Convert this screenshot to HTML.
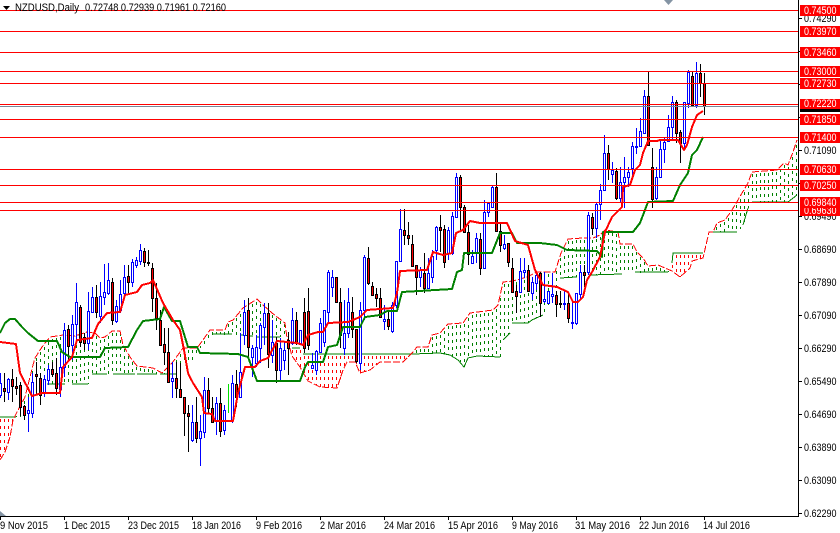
<!DOCTYPE html>
<html lang="en">
<head>
<meta charset="utf-8">
<title>NZDUSD Daily</title>
<style>
html,body{margin:0;padding:0;background:#fff;width:840px;height:533px;overflow:hidden}
svg{display:block;position:absolute;left:0;top:0}
text{font-family:"Liberation Sans",sans-serif;font-size:11px;fill:#000}
.w{fill:#fff}
</style>
</head>
<body>
<svg id="c" width="840" height="533" viewBox="0 0 840 533" xmlns="http://www.w3.org/2000/svg">
  <g id="hatch" shape-rendering="crispEdges"></g>
  <g id="spans" shape-rendering="crispEdges" fill="none" stroke-width="1"></g>
  <g id="candles" shape-rendering="crispEdges"></g>
  <g id="ind" shape-rendering="crispEdges" fill="none" stroke-width="2" stroke-linejoin="round"></g>
  <g id="hl" shape-rendering="crispEdges"></g>
  <g id="ticks" shape-rendering="crispEdges"></g>
  <polygon points="3,6 10,6 6.5,10" fill="#000"/>
  <polygon points="664,0 673,0 668.5,5" fill="#8494a4"/>
  <polygon points="0,511 6,516 0,516" fill="#8494a4"/>
  <text x="15" y="11" textLength="64" lengthAdjust="spacingAndGlyphs">NZDUSD,Daily</text>
  <text x="85" y="11" textLength="141" lengthAdjust="spacingAndGlyphs">0.72748 0.72939 0.71961 0.72160</text>

  <g text-anchor="start">
    <text x="804" y="22" textLength="32.5" lengthAdjust="spacingAndGlyphs">0.74290</text>
    <text x="804" y="154" textLength="32.5" lengthAdjust="spacingAndGlyphs">0.71090</text>
    <text x="804" y="220" textLength="32.5" lengthAdjust="spacingAndGlyphs">0.69490</text>
    <text x="804" y="253" textLength="32.5" lengthAdjust="spacingAndGlyphs">0.68690</text>
    <text x="804" y="286" textLength="32.5" lengthAdjust="spacingAndGlyphs">0.67890</text>
    <text x="804" y="319" textLength="32.5" lengthAdjust="spacingAndGlyphs">0.67090</text>
    <text x="804" y="352" textLength="32.5" lengthAdjust="spacingAndGlyphs">0.66290</text>
    <text x="804" y="385" textLength="32.5" lengthAdjust="spacingAndGlyphs">0.65490</text>
    <text x="804" y="418" textLength="32.5" lengthAdjust="spacingAndGlyphs">0.64690</text>
    <text x="804" y="451" textLength="32.5" lengthAdjust="spacingAndGlyphs">0.63890</text>
    <text x="804" y="484" textLength="32.5" lengthAdjust="spacingAndGlyphs">0.63090</text>
    <text x="804" y="517" textLength="32.5" lengthAdjust="spacingAndGlyphs">0.62290</text>
  </g>

  <g shape-rendering="crispEdges" fill="#ff0000">
    <rect x="800" y="102" width="40" height="10" fill="#000"/>
    <rect x="800" y="5" width="40" height="11"/>
    <rect x="800" y="26" width="40" height="11"/>
    <rect x="800" y="47" width="40" height="11"/>
    <rect x="800" y="66" width="40" height="11"/>
    <rect x="800" y="78" width="40" height="11"/>
    <rect x="800" y="99" width="40" height="10"/>
    <rect x="800" y="114" width="40" height="11"/>
    <rect x="800" y="132" width="40" height="11"/>
    <rect x="800" y="164" width="40" height="11"/>
    <rect x="800" y="180" width="40" height="11"/>
    <rect x="800" y="205" width="40" height="11"/>
  </g>
  <text class="w" x="804" y="14" textLength="32.5" lengthAdjust="spacingAndGlyphs">0.74500</text>
  <text class="w" x="804" y="35" textLength="32.5" lengthAdjust="spacingAndGlyphs">0.73970</text>
  <text class="w" x="804" y="56" textLength="32.5" lengthAdjust="spacingAndGlyphs">0.73460</text>
  <text class="w" x="804" y="75" textLength="32.5" lengthAdjust="spacingAndGlyphs">0.73000</text>
  <text class="w" x="804" y="87" textLength="32.5" lengthAdjust="spacingAndGlyphs">0.72730</text>
  <text class="w" x="804" y="107" textLength="32.5" lengthAdjust="spacingAndGlyphs">0.72220</text>
  <text class="w" x="804" y="123" textLength="32.5" lengthAdjust="spacingAndGlyphs">0.71850</text>
  <text class="w" x="804" y="141" textLength="32.5" lengthAdjust="spacingAndGlyphs">0.71400</text>
  <text class="w" x="804" y="173" textLength="32.5" lengthAdjust="spacingAndGlyphs">0.70630</text>
  <text class="w" x="804" y="189" textLength="32.5" lengthAdjust="spacingAndGlyphs">0.70250</text>
  <text class="w" x="804" y="214" textLength="32.5" lengthAdjust="spacingAndGlyphs">0.69630</text>
  <rect x="800" y="197" width="40" height="11" fill="#ff0000" shape-rendering="crispEdges"/>
  <text class="w" x="804" y="206" textLength="32.5" lengthAdjust="spacingAndGlyphs">0.69840</text>

  <text x="0" y="529" textLength="48" lengthAdjust="spacingAndGlyphs">9 Nov 2015</text>
  <text x="64" y="529" textLength="46" lengthAdjust="spacingAndGlyphs">1 Dec 2015</text>
  <text x="128" y="529" textLength="51" lengthAdjust="spacingAndGlyphs">23 Dec 2015</text>
  <text x="192" y="529" textLength="49" lengthAdjust="spacingAndGlyphs">18 Jan 2016</text>
  <text x="256" y="529" textLength="46" lengthAdjust="spacingAndGlyphs">9 Feb 2016</text>
  <text x="320" y="529" textLength="46" lengthAdjust="spacingAndGlyphs">2 Mar 2016</text>
  <text x="384" y="529" textLength="51" lengthAdjust="spacingAndGlyphs">24 Mar 2016</text>
  <text x="448" y="529" textLength="50" lengthAdjust="spacingAndGlyphs">15 Apr 2016</text>
  <text x="512" y="529" textLength="46" lengthAdjust="spacingAndGlyphs">9 May 2016</text>
  <text x="575" y="529" textLength="55" lengthAdjust="spacingAndGlyphs">31 May 2016</text>
  <text x="639" y="529" textLength="50" lengthAdjust="spacingAndGlyphs">22 Jun 2016</text>
  <text x="703" y="529" textLength="47" lengthAdjust="spacingAndGlyphs">14 Jul 2016</text>
</svg>
<script>
(function(){
var NS="http://www.w3.org/2000/svg";
function el(parent,name,attrs){var e=document.createElementNS(NS,name);for(var k in attrs)e.setAttribute(k,attrs[k]);document.getElementById(parent).appendChild(e);return e;}
function rect(p,x,y,w,h,f){el(p,"rect",{x:x,y:y,width:w,height:h,fill:f});}

var A=[0,460,5,452,10,437,13,420,16,414,25,397,33,365,35,358,42,347,50,337,63,335,75,336,87,332,95,333,100,338,105,337,112,331,120,331,123,345,130,357,137,366,153,368,162,373,172,363,183,348,197,348,203,340,210,330,225,330,228,322,233,320,243,308,257,299,263,305,272,313,285,323,287,338,292,356,300,367,308,381,320,387,337,388,343,370,347,362,355,362,360,373,370,370,380,362,403,362,412,353,417,347,428,347,432,335,440,333,448,324,463,323,470,313,493,310,498,305,503,282,513,281,527,277,537,272,555,272,561,253,568,239,583,238,593,238,600,235,605,230,618,232,620,244,633,244,637,252,643,258,648,266,658,265,672,271,680,277,690,268,692,261,703,258,706,245,709,232,713,232,717,223,725,220,732,210,748,183,752,172,777,170,784,163,788,165,793,152,797,140];
var B=[0,417,16,417,25,418,30,415,33,397,37,384,88,384,92,374,177,374,182,362,193,362,198,350,213,334,257,337,285,337,287,338,292,348,300,348,303,354,413,354,440,353,450,355,458,360,464,367,468,358,477,356,500,357,503,340,510,333,512,323,528,323,532,320,543,315,550,302,560,278,577,277,590,275,622,274,630,273,668,272,672,263,673,253,703,253,706,252,707,238,709,232,737,232,743,225,748,208,752,202,788,202,797,195];
function at(L,x){for(var i=0;i<L.length-2;i+=2){if(x>=L[i]&&x<=L[i+2]){var t=(x-L[i])/((L[i+2]-L[i])||1);return L[i+1]+t*(L[i+3]-L[i+1]);}}return L[L.length-1];}
function pts(L){var s=[];for(var i=0;i<L.length;i+=2)s.push(L[i]+","+L[i+1]);return s.join(" ");}

var dG="",dR="";
for(var x=0;x<=796;x+=4){
  var a=at(A,x),b=at(B,x),t=Math.round(Math.min(a,b)),u=Math.round(Math.max(a,b));
  for(var y=t+2;y<u;y+=7){
    var h=Math.min(3,u-y);
    var s="M"+x+" "+y+"h1v"+h+"h-1z";if(a<b)dG+=s;else dR+=s;
  }
}
el("hatch","path",{d:dG,fill:"#008000"});
el("hatch","path",{d:dR,fill:"#ff0000"});
[[0,417,16,417],[47,384,65,384],[72,384,88,384],[92,374,107,374],[113,374,135,374],[137,374,157,374],[160,374,177,374],[213,334,232,334],[240,335,253,336],[257,337,280,337],[292,348,300,348],[303,354,413,354],[413,354,440,353],[440,353,450,355,458,360,464,367,468,358,477,356,500,357],[503,340,510,333],[512,323,528,323,532,320,543,315],[560,278,577,277],[590,275,622,274],[635,272,668,272],[672,263,673,253,703,253],[713,232,737,232],[743,225,748,208],[752,202,788,202,797,195]].forEach(function(S){
  el("spans","polyline",{points:pts(S),stroke:"#008000"});
});
el("spans","polyline",{points:pts(A),stroke:"#ff0000","stroke-dasharray":"7 2"});

var D="b0 373 398 383 395,r4 373 402 388 391,b8 378 400 379 392,r12 369 402 379 386,r16 377 395 386 388,r20 382 416 385 407,r24 405 420 406 415,b28 397 432 410 413,b32 373 418 382 413,r36 362 395 374 376,r40 373 405 378 395,b44 375 397 379 393,b48 365 385 369 380,r52 362 377 369 374,r56 358 395 373 388,b60 353 397 367 389,b64 323 377 330 367,r68 325 362 329 346,b72 315 360 324 345,b76 283 340 302 324,r80 305 347 307 342,r84 333 350 337 343,b88 292 350 311 343,b92 287 313 297 312,r96 285 318 297 312,b100 282 323 296 316,b104 264 305 292 297,b108 263 295 280 293,r112 278 325 282 320,b116 300 323 306 321,b120 280 313 294 310,b124 265 297 277 293,r128 265 294 276 282,b132 259 287 262 282,b136 257 268 260 265,b140 244 265 250 261,r144 248 267 251 262,r148 250 266 262 263,r152 263 312 268 298,r156 283 330 298 318,r160 310 345 320 345,r164 328 365 344 352,r168 328 383 352 382,b172 362 398 378 381,r176 362 398 378 388,r180 363 397 389 397,r184 397 436 397 413,r188 405 452 413 416,b192 405 442 422 440,r196 397 443 422 438,b200 415 466 431 438,b204 377 438 390 432,r208 378 413 390 408,r212 397 423 408 422,b216 397 435 403 420,r220 388 437 403 431,b224 405 435 410 430,g228 384 413 384 384,b232 375 423 383 420,r236 370 407 384 397,b240 333 398 372 397,b244 300 345 312 335,r248 298 357 310 347,b252 345 377 348 357,b256 335 367 347 363,b260 323 363 325 348,b264 303 345 313 327,r268 303 368 313 354,b272 320 363 342 355,r276 337 383 343 370,b280 338 380 348 370,b284 342 370 350 360,r288 332 375 340 348,b292 308 345 320 343,r296 312 345 320 343,b300 330 345 330 343,r304 298 353 312 348,r308 288 350 311 345,b312 353 368 365 368,b316 350 375 351 370,b320 318 353 323 352,b324 310 347 310 342,b328 270 323 272 312,b332 270 297 277 287,r336 277 302 277 302,r340 288 348 302 335,b344 300 355 333 348,b348 288 338 302 333,r352 297 338 312 329,r356 329 363 329 361,b360 302 370 310 363,b364 255 320 257 310,r368 247 285 258 283,r372 282 295 286 295,r376 288 307 294 298,r380 288 318 298 317,b384 305 330 319 321,r388 310 330 319 326,b392 302 333 305 331,b396 261 308 261 305,b400 209 262 229 261,r404 209 245 230 235,r408 222 245 235 238,r412 235 267 244 266,r416 265 295 265 277,b420 267 287 270 277,r424 253 293 273 288,b428 258 289 273 288,b432 250 283 256 277,b436 226 260 227 250,r440 215 252 227 230,r444 225 268 229 262,b448 227 260 230 253,b452 212 255 216 253,b456 173 218 177 217,r460 175 232 177 207,r464 205 233 207 232,r468 225 265 232 254,b472 250 263 256 263,b476 233 263 238 253,r480 233 275 239 268,b484 200 268 212 268,b488 202 217 203 212,b492 186 207 187 207,r496 173 232 187 231,r500 222 252 231 245,b504 235 250 244 248,r508 243 267 243 262,r512 258 293 268 292,r516 285 313 291 296,b520 258 293 271 292,b524 258 278 270 272,r528 265 292 270 291,b532 277 300 282 293,b536 272 290 275 283,r540 272 317 273 303,b544 272 303 299 301,b548 291 303 291 303,b552 273 303 294 296,r556 291 317 295 304,r560 291 308 303 304,b564 291 310 303 304,r568 293 323 303 318,b572 302 329 322 323,b576 293 325 293 323,b580 265 300 272 294,r584 265 287 272 275,b588 212 275 215 272,r592 213 235 217 228,b596 203 238 204 228,b600 184 220 190 204,b604 135 186 153 190,r608 145 180 153 169,b612 162 183 170 174,r616 168 200 171 198,b620 167 203 182 198,b624 157 208 177 182,b628 167 187 172 177,b632 142 175 146 168,b636 128 154 146 147,b640 118 147 131 146,b644 90 133 96 133,r648 72 146 96 145,r652 148 208 167 199,b656 167 200 177 198,b660 140 177 149 177,b664 138 163 142 149,b668 115 142 127 141,b672 96 140 102 127,r676 100 143 102 133,r680 130 163 132 143,b684 102 150 102 143,b688 70 108 72 103,r692 72 107 76 105,b696 62 108 73 105,r700 64 97 73 83,r704 73 115 83 106".split(",");
D.forEach(function(r){
  var p=r.split(" "),t=p[0][0],x=+p[0].slice(1),hi=+p[1],lo=+p[2],top=+p[3],bot=+p[4];
  if(t=="g"){rect("candles",x,hi,1,lo-hi,"#00e000");return;}
  var c=t=="b"?"#0000ff":"#000000",f=t=="b"?"#ffffff":"#ff0000",h=bot-top+1;
  rect("candles",x,hi,1,Math.max(lo-hi,1),c);
  rect("candles",x-1,top,3,h,c);
  if(h>2)rect("candles",x,top+1,1,h-2,f);
});

el("ind","polyline",{stroke:"#008000",points:"0,333 5,323 10,319 15,319 22,327 28,333 38,341 57,341 62,352 70,357 100,357 105,348 128,347 137,330 143,321 160,319 164,307 172,321 180,321 188,347 197,347 200,353 238,354 248,357 257,381 300,381 305,367 308,362 323,362 328,347 337,345 343,327 360,327 365,317 380,315 387,311 397,311 402,292 452,289 457,272 462,270 464,253 492,253 500,233 512,233 517,243 540,243 557,245 567,250 597,251 602,257 603,232 633,232 640,223 648,202 673,201 680,185 688,173 692,155 697,150 703,137"});
el("ind","polyline",{stroke:"#ff0000",points:"0,342 16,344 20,373 32,396 42,393 60,393 63,367 72,357 77,340 92,338 98,324 107,313 120,312 125,295 137,292 142,285 150,283 153,280 163,303 173,320 180,330 184,350 188,373 193,383 202,397 204,413 212,414 215,421 233,421 238,393 245,367 255,367 260,361 268,358 277,341 297,343 303,345 308,335 318,332 323,332 328,323 348,322 360,317 367,310 393,308 397,293 400,271 427,270 433,252 443,255 452,253 456,233 463,230 470,221 480,223 507,223 515,241 528,245 535,270 543,285 557,287 568,292 573,302 578,302 583,297 587,280 592,272 600,257 605,232 612,217 622,207 623,187 630,185 635,170 640,165 643,153 648,141 657,141 660,140 678,140 684,150 687,145 692,127 697,115 703,111"});

[10,31,52,71,83,104,119,137,169,185,202,210].forEach(function(y){rect("hl",0,y,798,1,"#ff0000");});
rect("hl",0,106,798,1,"#778899");

rect("ticks",798,0,1,517,"#000");
rect("ticks",0,516,799,1,"#000");
for(var y=18;y<=513;y+=33)rect("ticks",799,y,3,1,"#000");
for(var x=0;x<=704;x+=64)rect("ticks",x,516,1,4,"#000");
})();
</script>
</body>
</html>
